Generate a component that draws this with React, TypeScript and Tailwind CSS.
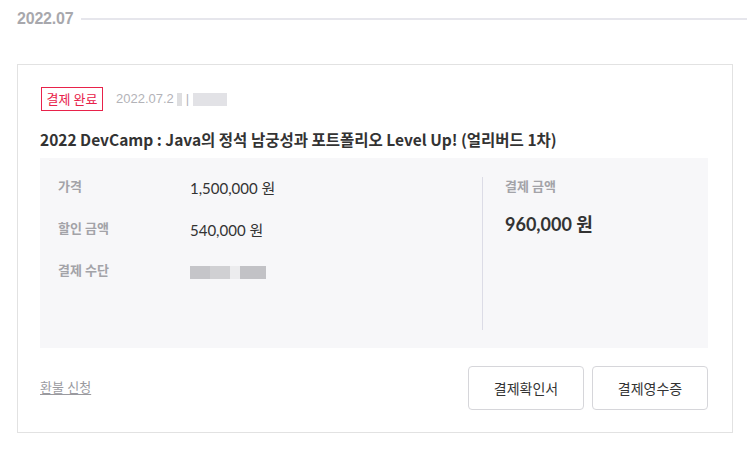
import React from 'react';

const KO = "font-['Lato','Noto_Sans_CJK_KR',sans-serif]";

const Blur = ({ w, shade = 'bg-[#c9c9cc]' }: { w: number; shade?: string }) => (
  <span className={`inline-block h-[13px] ${shade}`} style={{ width: w }} />
);

const InfoRow = ({ label, children }: { label: string; children: React.ReactNode }) => (
  <div className="flex items-center h-[20px]">
    <span className="w-[132px] text-[13px] font-bold text-[#a3a3a8]">{label}</span>
    <span className="text-[15px] text-[#333] mt-[2px]">{children}</span>
  </div>
);

const App = () => {
  return (
    <div className={`w-[747px] h-[449px] bg-white overflow-hidden ${KO}`}>
      {/* Month header */}
      <div className="flex items-center pl-[17px] h-[37px]">
        <span className="text-[16px] font-bold text-[#a8a8ad] font-['Liberation_Sans',sans-serif] tracking-[-0.2px]">
          2022.07
        </span>
        <div className="flex-1 ml-[8px] h-[2px] bg-[#e6e6ec]" />
      </div>

      {/* Order card */}
      <div className="mt-[27px] ml-[17px] w-[716px] h-[369px] border border-[#e2e2e2] pl-[22px] pr-[24px] pt-[22px]">
        <div className="flex items-center">
          <span className="ml-px h-[24px] w-[62px] flex items-center justify-center border border-[#e8224a] text-[#e8224a] text-[13px] font-['Noto_Sans_CJK_KR',sans-serif]">
            결제 완료
          </span>
          <span className="ml-[13px] flex items-center gap-[3px] text-[13px] text-[#b3b3b8] font-['Liberation_Sans',sans-serif]">
            2022.07.2
            <Blur w={5} shade="bg-[#dedee0]" />
            <span className="mx-[1px]">|</span>
            <Blur w={34} shade="bg-[#e2e2e6]" />
          </span>
        </div>

        <h2 className="mt-[17px] text-[15.5px] font-bold text-[#333] leading-[22px] font-['Noto_Sans_CJK_KR',sans-serif]">
          2022 DevCamp : Java의 정석 남궁성과 포트폴리오 Level Up! (얼리버드 1차)
        </h2>

        <div className="mt-[8px] h-[190px] bg-[#f7f7f9] flex pt-[19px] pb-[18px]">
          <div className="w-[442px] pl-[18px] flex flex-col gap-[22px]">
            <InfoRow label="가격">1,500,000 원</InfoRow>
            <InfoRow label="할인 금액">540,000 원</InfoRow>
            <InfoRow label="결제 수단">
              <span className="flex items-center">
                <Blur w={20} shade="bg-[#c5c5c9]" />
                <Blur w={20} shade="bg-[#d0d0d3]" />
                <Blur w={10} shade="bg-[#ececee]" />
                <Blur w={26} shade="bg-[#c2c2c6]" />
              </span>
            </InfoRow>
          </div>
          <div className="w-px bg-[#dcdce6]" />
          <div className="pl-[22px]">
            <div className="h-[20px] flex items-center text-[13px] font-bold text-[#a3a3a8]">결제 금액</div>
            <div className="mt-[14px] text-[18px] font-bold text-[#333]">960,000 원</div>
          </div>
        </div>

        <div className="mt-[18px] flex items-center justify-between">
          <a className="text-[13px] text-[#9a9a9f] underline underline-offset-2">환불 신청</a>
          <div className="flex gap-[8px]">
            <button className="w-[116px] h-[44px] border border-[#d6d6da] rounded-[4px] bg-white text-[14px] text-[#333]">
              결제확인서
            </button>
            <button className="w-[116px] h-[44px] border border-[#d6d6da] rounded-[4px] bg-white text-[14px] text-[#333]">
              결제영수증
            </button>
          </div>
        </div>
      </div>
    </div>
  );
};

export default App;
